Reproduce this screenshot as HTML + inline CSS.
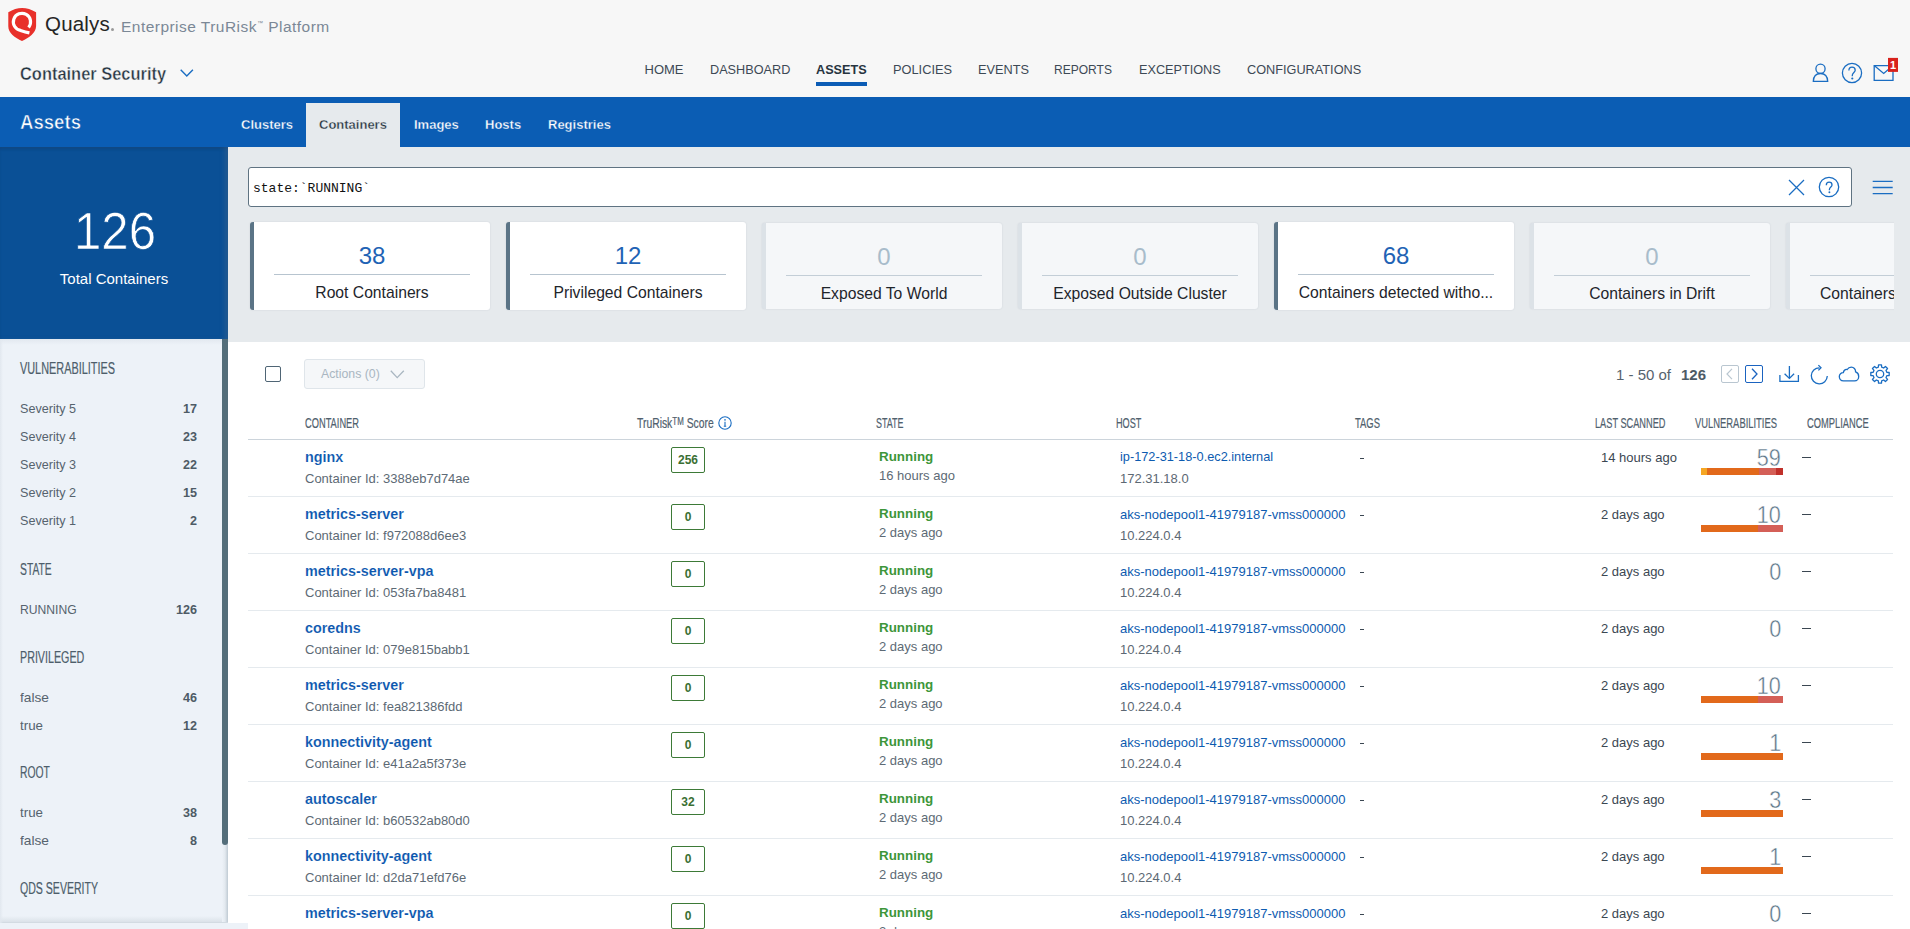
<!DOCTYPE html>
<html><head><meta charset="utf-8">
<style>
*{box-sizing:border-box;margin:0;padding:0}
html,body{width:1910px;height:929px;overflow:hidden;background:#fff;font-family:"Liberation Sans",sans-serif;color:#3b4752}
.t{position:absolute;white-space:nowrap;line-height:1}
.b{position:absolute}
</style></head><body>

<div class="b" style="left:0px;top:0px;width:1910px;height:97px;background:#f7f7f7"></div>
<svg class="b" style="left:0px;top:0px" width="45" height="45" viewBox="0 0 45 45"><path d="M8.3 12.2 Q22 3.6 36.1 12.2 L36.1 26.3 C35.8 33 29 38 22 41 C15 38 8.2 33 8.3 26.3 Z" fill="#e8302a"/>
<path d="M28.6 27.4 A8.6 8.6 0 1 0 20.5 30.4 C23.5 31.4 26.5 32.3 29.4 32.9" fill="none" stroke="#fff" stroke-width="3.2"/></svg>
<div class="t" style="left:45px;transform-origin:left top;top:13.95px;font-size:20.5px;color:#252525;letter-spacing:0.2px">Qualys</div>
<div class="b" style="left:111px;top:28px;width:3px;height:3px;background:#999;border-radius:50%"></div>
<div class="t" style="left:121px;transform-origin:left top;top:18.68px;font-size:15.5px;color:#7b8896;letter-spacing:0.47px">Enterprise TruRisk<span style="font-size:6px;position:relative;top:-7px">™</span> Platform</div>
<div class="t" style="left:20px;transform-origin:left top;top:64.86px;font-size:18px;transform:scaleX(0.913);font-weight:bold;color:#263441;-webkit-text-stroke:0.4px #f7f7f7">Container Security</div>
<svg class="b" style="left:180px;top:69px" width="14" height="9" viewBox="0 0 14 9"><path d="M0.7 0.7 L6.8 7 L12.9 0.7" fill="none" stroke="#1a6dc2" stroke-width="1.4"/></svg>
<div class="t" style="left:644.5px;transform-origin:left top;top:63.20px;font-size:13px;color:#3d4955">HOME</div>
<div class="t" style="left:709.5px;transform-origin:left top;top:63.20px;font-size:13px;transform:scaleX(0.975);color:#3d4955">DASHBOARD</div>
<div class="t" style="left:816px;transform-origin:left top;top:63.20px;font-size:13px;transform:scaleX(0.975);font-weight:bold;color:#27343f">ASSETS</div>
<div class="t" style="left:893px;transform-origin:left top;top:63.20px;font-size:13px;transform:scaleX(0.985);color:#3d4955">POLICIES</div>
<div class="t" style="left:977.5px;transform-origin:left top;top:63.20px;font-size:13px;transform:scaleX(0.98);color:#3d4955">EVENTS</div>
<div class="t" style="left:1054.3px;transform-origin:left top;top:63.20px;font-size:13px;transform:scaleX(0.925);color:#3d4955">REPORTS</div>
<div class="t" style="left:1139px;transform-origin:left top;top:63.20px;font-size:13px;transform:scaleX(0.975);color:#3d4955">EXCEPTIONS</div>
<div class="t" style="left:1246.5px;transform-origin:left top;top:63.20px;font-size:13px;transform:scaleX(0.978);color:#3d4955">CONFIGURATIONS</div>
<div class="b" style="left:816px;top:82px;width:51px;height:4px;background:#0b5cb5"></div>
<svg class="b" style="left:1808px;top:55px" width="95" height="32" viewBox="0 0 95 32"><g fill="none" stroke="#1a6dc2" stroke-width="1.3">
<circle cx="12.5" cy="13.7" r="4.6"/>
<path d="M5.3 26.4 C5.5 21.2 8.4 18.5 12.5 18.5 C16.6 18.5 19.5 21.2 19.7 26.4 Z"/>
<circle cx="44" cy="18" r="9.6"/>
<path d="M40.9 15.4 C40.9 13 42.4 12.2 44 12.2 C45.8 12.2 47.2 13.3 47.2 15.2 C47.2 17.4 44.3 17.6 44.3 20.3 L44.3 21.2"/>
<path d="M66.2 10.6 L85 10.6 L85 25.3 L66.2 25.3 Z"/>
<path d="M66.2 10.6 L75.7 18.4 L85 10.6"/>
</g>
<circle cx="44.3" cy="23.5" r="1.1" fill="#1a6dc2"/>
<rect x="80" y="2.9" width="10" height="14" fill="#d8221c"/>
<text x="85" y="13.5" font-size="11" font-weight="bold" fill="#fff" text-anchor="middle" font-family="Liberation Sans">1</text></svg>
<div class="b" style="left:0px;top:97px;width:1910px;height:50px;background:#0b5db4"></div>
<div class="t" style="left:20px;transform-origin:left top;top:112.27px;font-size:20px;transform:scaleX(0.93);color:#fff;font-weight:bold;-webkit-text-stroke:0.6px #0b5db4">Assets</div>
<div class="b" style="left:306px;top:103px;width:94px;height:44px;background:#e6eaed"></div>
<div class="t" style="left:241px;transform-origin:left top;top:118.00px;font-size:13px;font-weight:bold;color:#fff;-webkit-text-stroke:0.3px #0b5db4">Clusters</div>
<div class="t" style="left:319px;transform-origin:left top;top:118.00px;font-size:13px;font-weight:bold;color:#27343f;-webkit-text-stroke:0.3px #e6eaed">Containers</div>
<div class="t" style="left:414px;transform-origin:left top;top:118.00px;font-size:13px;font-weight:bold;color:#fff;-webkit-text-stroke:0.3px #0b5db4">Images</div>
<div class="t" style="left:485px;transform-origin:left top;top:118.00px;font-size:13px;font-weight:bold;color:#fff;-webkit-text-stroke:0.3px #0b5db4">Hosts</div>
<div class="t" style="left:548px;transform-origin:left top;top:118.00px;font-size:13px;font-weight:bold;color:#fff;-webkit-text-stroke:0.3px #0b5db4">Registries</div>
<div class="b" style="left:0px;top:147px;width:228px;height:192px;background:#0a5096;box-shadow:inset -5px 0 5px -2px rgba(60,100,140,0.55), inset 0 3px 3px -1px rgba(20,50,90,0.35)"></div>
<div class="t" style="left:-285.5px;width:800px;text-align:center;transform-origin:center top;top:205.83px;font-size:51px;transform:scaleX(0.965);color:#fff;-webkit-text-stroke:0.7px #0a5096">126</div>
<div class="t" style="left:-286px;width:800px;text-align:center;transform-origin:center top;top:270.90px;font-size:15px;color:#fff">Total Containers</div>
<div class="b" style="left:228px;top:147px;width:1682px;height:195px;background:#e6eaed"></div>
<div class="b" style="left:248px;top:167px;width:1604px;height:40px;background:#fff;border:1px solid #5f7382;border-radius:3px"></div>
<div class="t" style="left:253px;transform-origin:left top;top:181.64px;font-size:13px;font-family:'Liberation Mono',monospace;color:#111">state:`RUNNING`</div>
<svg class="b" style="left:1788px;top:179px" width="17" height="17" viewBox="0 0 17 17"><path d="M1 1 L16 16 M16 1 L1 16" stroke="#1a6dc2" stroke-width="1.25" fill="none"/></svg>
<svg class="b" style="left:1818px;top:176px" width="22" height="22" viewBox="0 0 22 22"><circle cx="11" cy="11" r="9.7" fill="none" stroke="#1a6dc2" stroke-width="1.3"/>
<path d="M8.3 9.3 C8.3 7.2 9.6 6.2 11.1 6.2 C12.8 6.2 14 7.3 14 8.9 C14 10.9 11.4 11 11.4 13.6 L11.4 14.2" fill="none" stroke="#1a6dc2" stroke-width="1.3"/>
<circle cx="11.4" cy="16.3" r="0.95" fill="#1a6dc2"/></svg>
<svg class="b" style="left:1872px;top:179px" width="22" height="16" viewBox="0 0 22 16"><path d="M0.7 2.4 H20.7 M0.7 8.5 H20.7 M0.7 14.6 H20.7" stroke="#1a6dc2" stroke-width="1.3" fill="none"/></svg>
<div class="b" style="left:248px;top:218px;width:1646px;height:96px;overflow:hidden">
<div class="b" style="left:2px;top:4px;width:240px;height:88px;background:#fff;border-radius:3px;border-left:4px solid #5b7486;box-shadow:0 0 2px rgba(40,60,80,0.12)"></div>
<div class="b" style="left:26px;top:56px;width:196px;height:1px;background:#b7c4cf"></div>
<div class="t" style="left:-276px;width:800px;text-align:center;top:25.68px;font-size:24px;color:#1f63b5">38</div>
<div class="t" style="left:-276px;width:800px;text-align:center;top:66.71px;font-size:15.7px;color:#1e252b">Root Containers</div>
<div class="b" style="left:258px;top:4px;width:240px;height:88px;background:#fff;border-radius:3px;border-left:4px solid #5b7486;box-shadow:0 0 2px rgba(40,60,80,0.12)"></div>
<div class="b" style="left:282px;top:56px;width:196px;height:1px;background:#b7c4cf"></div>
<div class="t" style="left:-20px;width:800px;text-align:center;top:25.68px;font-size:24px;color:#1f63b5">12</div>
<div class="t" style="left:-20px;width:800px;text-align:center;top:66.71px;font-size:15.7px;color:#1e252b">Privileged Containers</div>
<div class="b" style="left:514px;top:5px;width:240px;height:86px;background:#f5f7f9;border-radius:3px;border-left:4px solid #dce2e7;box-shadow:0 0 2px rgba(40,60,80,0.12)"></div>
<div class="b" style="left:538px;top:57px;width:196px;height:1px;background:#c3ced7"></div>
<div class="t" style="left:236px;width:800px;text-align:center;top:26.68px;font-size:24px;color:#a8bccb">0</div>
<div class="t" style="left:236px;width:800px;text-align:center;top:67.71px;font-size:15.7px;color:#1e252b">Exposed To World</div>
<div class="b" style="left:770px;top:5px;width:240px;height:86px;background:#f5f7f9;border-radius:3px;border-left:4px solid #dce2e7;box-shadow:0 0 2px rgba(40,60,80,0.12)"></div>
<div class="b" style="left:794px;top:57px;width:196px;height:1px;background:#c3ced7"></div>
<div class="t" style="left:492px;width:800px;text-align:center;top:26.68px;font-size:24px;color:#a8bccb">0</div>
<div class="t" style="left:492px;width:800px;text-align:center;top:67.71px;font-size:15.7px;color:#1e252b">Exposed Outside Cluster</div>
<div class="b" style="left:1026px;top:4px;width:240px;height:88px;background:#fff;border-radius:3px;border-left:4px solid #5b7486;box-shadow:0 0 2px rgba(40,60,80,0.12)"></div>
<div class="b" style="left:1050px;top:56px;width:196px;height:1px;background:#b7c4cf"></div>
<div class="t" style="left:748px;width:800px;text-align:center;top:25.68px;font-size:24px;color:#1f63b5">68</div>
<div class="t" style="left:748px;width:800px;text-align:center;top:66.71px;font-size:15.7px;color:#1e252b">Containers detected witho...</div>
<div class="b" style="left:1282px;top:5px;width:240px;height:86px;background:#f5f7f9;border-radius:3px;border-left:4px solid #dce2e7;box-shadow:0 0 2px rgba(40,60,80,0.12)"></div>
<div class="b" style="left:1306px;top:57px;width:196px;height:1px;background:#c3ced7"></div>
<div class="t" style="left:1004px;width:800px;text-align:center;top:26.68px;font-size:24px;color:#a8bccb">0</div>
<div class="t" style="left:1004px;width:800px;text-align:center;top:67.71px;font-size:15.7px;color:#1e252b">Containers in Drift</div>
<div class="b" style="left:1538px;top:5px;width:240px;height:86px;background:#f5f7f9;border-radius:3px;border-left:4px solid #dce2e7;box-shadow:0 0 2px rgba(40,60,80,0.12)"></div>
<div class="b" style="left:1562px;top:57px;width:196px;height:1px;background:#c3ced7"></div>
<div class="t" style="left:1260px;width:800px;text-align:center;top:26.68px;font-size:24px;color:#a8bccb">0</div>
<div class="t" style="left:1572px;top:67.71px;font-size:15.7px;color:#1e252b">Containers with Secrets</div>
</div>
<div class="b" style="left:0px;top:339px;width:228px;height:590px;background:#edf2f8"></div>
<div class="b" style="left:0px;top:339px;width:222px;height:6px;background:linear-gradient(#e2e8ef,#edf2f8)"></div>
<div class="b" style="left:222px;top:339px;width:6px;height:584px;background:linear-gradient(90deg,#edf2f8,#e3e9ef 50%,#bfcad3)"></div>
<div class="b" style="left:222px;top:339px;width:6px;height:506px;background:#546e7a;border-radius:0 0 3px 3px"></div>
<div class="b" style="left:0px;top:916px;width:222px;height:6px;background:linear-gradient(rgba(213,221,228,0),#dbe2e9)"></div>
<div class="b" style="left:0px;top:922px;width:228px;height:1px;background:#d3dbe2"></div>
<div class="b" style="left:0px;top:339px;width:3px;height:584px;background:linear-gradient(90deg,#e2e8ef,rgba(237,242,248,0))"></div>
<div class="b" style="left:0px;top:923px;width:248px;height:6px;background:#edf2f8"></div>
<div class="t" style="left:20px;transform-origin:left top;top:360.96px;font-size:16px;transform:scaleX(0.68);color:#4d5e6b;-webkit-text-stroke:0.2px #4d5e6b">VULNERABILITIES</div>
<div class="t" style="left:20px;transform-origin:left top;top:402.93px;font-size:12.6px;color:#56636e">Severity 5</div>
<div class="t" style="right:1713px;transform-origin:right top;text-align:right;top:402.93px;font-size:12.6px;font-weight:bold;color:#4e5b66">17</div>
<div class="t" style="left:20px;transform-origin:left top;top:430.93px;font-size:12.6px;color:#56636e">Severity 4</div>
<div class="t" style="right:1713px;transform-origin:right top;text-align:right;top:430.93px;font-size:12.6px;font-weight:bold;color:#4e5b66">23</div>
<div class="t" style="left:20px;transform-origin:left top;top:458.93px;font-size:12.6px;color:#56636e">Severity 3</div>
<div class="t" style="right:1713px;transform-origin:right top;text-align:right;top:458.93px;font-size:12.6px;font-weight:bold;color:#4e5b66">22</div>
<div class="t" style="left:20px;transform-origin:left top;top:486.93px;font-size:12.6px;color:#56636e">Severity 2</div>
<div class="t" style="right:1713px;transform-origin:right top;text-align:right;top:486.93px;font-size:12.6px;font-weight:bold;color:#4e5b66">15</div>
<div class="t" style="left:20px;transform-origin:left top;top:514.93px;font-size:12.6px;color:#56636e">Severity 1</div>
<div class="t" style="right:1713px;transform-origin:right top;text-align:right;top:514.93px;font-size:12.6px;font-weight:bold;color:#4e5b66">2</div>
<div class="t" style="left:20px;transform-origin:left top;top:561.56px;font-size:16px;transform:scaleX(0.645);color:#4d5e6b;-webkit-text-stroke:0.2px #4d5e6b">STATE</div>
<div class="t" style="left:20px;transform-origin:left top;top:604.13px;font-size:12.6px;transform:scaleX(0.965);color:#56636e">RUNNING</div>
<div class="t" style="right:1713px;transform-origin:right top;text-align:right;top:604.13px;font-size:12.6px;font-weight:bold;color:#4e5b66">126</div>
<div class="t" style="left:20px;transform-origin:left top;top:649.56px;font-size:16px;transform:scaleX(0.67);color:#4d5e6b;-webkit-text-stroke:0.2px #4d5e6b">PRIVILEGED</div>
<div class="t" style="left:20px;transform-origin:left top;top:691.53px;font-size:12.6px;transform:scaleX(1.09);color:#56636e">false</div>
<div class="t" style="right:1713px;transform-origin:right top;text-align:right;top:691.53px;font-size:12.6px;font-weight:bold;color:#4e5b66">46</div>
<div class="t" style="left:20px;transform-origin:left top;top:719.53px;font-size:12.6px;transform:scaleX(1.06);color:#56636e">true</div>
<div class="t" style="right:1713px;transform-origin:right top;text-align:right;top:719.53px;font-size:12.6px;font-weight:bold;color:#4e5b66">12</div>
<div class="t" style="left:20px;transform-origin:left top;top:765.36px;font-size:16px;transform:scaleX(0.647);color:#4d5e6b;-webkit-text-stroke:0.2px #4d5e6b">ROOT</div>
<div class="t" style="left:20px;transform-origin:left top;top:807.43px;font-size:12.6px;transform:scaleX(1.06);color:#56636e">true</div>
<div class="t" style="right:1713px;transform-origin:right top;text-align:right;top:807.43px;font-size:12.6px;font-weight:bold;color:#4e5b66">38</div>
<div class="t" style="left:20px;transform-origin:left top;top:835.43px;font-size:12.6px;transform:scaleX(1.09);color:#56636e">false</div>
<div class="t" style="right:1713px;transform-origin:right top;text-align:right;top:835.43px;font-size:12.6px;font-weight:bold;color:#4e5b66">8</div>
<div class="t" style="left:20px;transform-origin:left top;top:881.16px;font-size:16px;transform:scaleX(0.66);color:#4d5e6b;-webkit-text-stroke:0.2px #4d5e6b">QDS SEVERITY</div>
<div class="b" style="left:265px;top:366px;width:16px;height:16px;border:1.5px solid #4f6575;border-radius:2px;background:#fff"></div>
<div class="b" style="left:304px;top:359px;width:121px;height:30px;background:#f5f7f9;border:1px solid #dfe5ea;border-radius:3px"></div>
<div class="t" style="left:321px;transform-origin:left top;top:367.59px;font-size:12.3px;color:#a9b6c1">Actions (0)</div>
<svg class="b" style="left:390px;top:370px" width="15" height="9" viewBox="0 0 15 9"><path d="M0.8 0.8 L7.2 7.6 L13.8 0.8" fill="none" stroke="#a9b6c1" stroke-width="1.3"/></svg>
<div class="t" style="left:1616px;transform-origin:left top;top:367.00px;font-size:15px;color:#56636e">1 - 50 of</div>
<div class="t" style="left:1681px;transform-origin:left top;top:367.00px;font-size:15px;font-weight:bold;color:#4e5b66">126</div>
<div class="b" style="left:1721px;top:365px;width:18px;height:18px;border:1px solid #b9c6d0;border-radius:2px"></div>
<svg class="b" style="left:1726px;top:368px" width="7" height="12" viewBox="0 0 7 12"><path d="M6 0.8 L1 6 L6 11.2" fill="none" stroke="#b9c6d0" stroke-width="1.2"/></svg>
<div class="b" style="left:1745px;top:365px;width:18px;height:18px;border:1.4px solid #1a63c0;border-radius:2px"></div>
<svg class="b" style="left:1751px;top:368px" width="8" height="12" viewBox="0 0 8 12"><path d="M1 0.8 L6 6 L1 11.2" fill="none" stroke="#1a63c0" stroke-width="1.3"/></svg>
<svg class="b" style="left:1778px;top:364px" width="22" height="20" viewBox="0 0 22 20"><g fill="none" stroke="#1a6dc2" stroke-width="1.3">
<path d="M11.4 2 V14"/><path d="M6.6 9.8 L11.4 14.4 L16.1 9.8"/><path d="M1.9 11 V17.4 H20.4 V11"/></g></svg>
<svg class="b" style="left:1809px;top:363px" width="22" height="22" viewBox="0 0 22 22"><g fill="none" stroke="#1a6dc2" stroke-width="1.3">
<path d="M18.3 13.1 A8 8 0 1 1 10.5 4.8"/><path d="M9.4 2.1 L12 4.8 L9.4 7.4"/></g></svg>
<svg class="b" style="left:1837px;top:365px" width="24" height="19" viewBox="0 0 24 19"><path d="M6.5 15.9 C3.6 15.9 2.3 13.8 2.3 11.6 C2.3 9.2 4.2 7.5 6.3 7.6 C6.8 5.4 8.5 4.2 10.2 4.5 C11.2 2.8 12.7 2.1 14.3 2.1 C16.8 2.1 18.7 4.1 18.6 6.9 C20.8 7.6 21.7 9.5 21.7 11.4 C21.7 13.8 20 15.9 17.6 15.9 Z" fill="none" stroke="#1a6dc2" stroke-width="1.3"/></svg>
<svg class="b" style="left:1869px;top:363px" width="22" height="22" viewBox="0 0 22 22"><path d="M17.80 9.34 L20.18 9.52 L20.18 12.48 L17.80 12.66 L16.98 14.63 L18.54 16.44 L16.44 18.54 L14.63 16.98 L12.66 17.80 L12.48 20.18 L9.52 20.18 L9.34 17.80 L7.37 16.98 L5.56 18.54 L3.46 16.44 L5.02 14.63 L4.20 12.66 L1.82 12.48 L1.82 9.52 L4.20 9.34 L5.02 7.37 L3.46 5.56 L5.56 3.46 L7.37 5.02 L9.34 4.20 L9.52 1.82 L12.48 1.82 L12.66 4.20 L14.63 5.02 L16.44 3.46 L18.54 5.56 L16.98 7.37 Z" fill="none" stroke="#1a6dc2" stroke-width="1.3" stroke-linejoin="round"/><circle cx="11" cy="11" r="3.7" fill="none" stroke="#1a6dc2" stroke-width="1.3"/></svg>
<div class="t" style="left:305px;transform-origin:left top;top:416.11px;font-size:14.4px;transform:scaleX(0.645);color:#4f606d;-webkit-text-stroke:0.2px #4f606d">CONTAINER</div>
<div class="t" style="left:637px;transform-origin:left top;top:416.11px;font-size:14.4px;transform:scaleX(0.72);color:#4f606d;-webkit-text-stroke:0.2px #4f606d">TruRisk<span style="font-size:11px;position:relative;top:-3px">TM</span> Score</div>
<svg class="b" style="left:718px;top:416px" width="14" height="14" viewBox="0 0 14 14"><circle cx="7" cy="7" r="6.2" fill="none" stroke="#1a6dc2" stroke-width="1.1"/><path d="M7 5.8 V10.2 M5.8 10.3 H8.2" stroke="#1a6dc2" stroke-width="1.1"/><circle cx="7" cy="3.9" r="0.8" fill="#1a6dc2"/></svg>
<div class="t" style="left:876px;transform-origin:left top;top:416.11px;font-size:14.4px;transform:scaleX(0.62);color:#4f606d;-webkit-text-stroke:0.2px #4f606d">STATE</div>
<div class="t" style="left:1116px;transform-origin:left top;top:416.11px;font-size:14.4px;transform:scaleX(0.635);color:#4f606d;-webkit-text-stroke:0.2px #4f606d">HOST</div>
<div class="t" style="left:1355px;transform-origin:left top;top:416.11px;font-size:14.4px;transform:scaleX(0.656);color:#4f606d;-webkit-text-stroke:0.2px #4f606d">TAGS</div>
<div class="t" style="left:1595px;transform-origin:left top;top:416.11px;font-size:14.4px;transform:scaleX(0.64);color:#4f606d;-webkit-text-stroke:0.2px #4f606d">LAST SCANNED</div>
<div class="t" style="left:1695px;transform-origin:left top;top:416.11px;font-size:14.4px;transform:scaleX(0.653);color:#4f606d;-webkit-text-stroke:0.2px #4f606d">VULNERABILITIES</div>
<div class="t" style="left:1807px;transform-origin:left top;top:416.11px;font-size:14.4px;transform:scaleX(0.648);color:#4f606d;-webkit-text-stroke:0.2px #4f606d">COMPLIANCE</div>
<div class="b" style="left:248px;top:439px;width:1645px;height:1px;background:#ccd4db"></div>
<div class="t" style="left:305px;transform-origin:left top;top:449.65px;font-size:14.35px;font-weight:bold;color:#0a56ae;-webkit-text-stroke:0.12px #fff">nginx</div>
<div class="t" style="left:305px;transform-origin:left top;top:472.00px;font-size:13px;color:#5d6a75">Container Id: 3388eb7d74ae</div>
<div class="b" style="left:671px;top:447px;width:34px;height:26px;border:1.5px solid #3d7a37;border-radius:2px"></div>
<div class="t" style="left:288px;width:800px;text-align:center;transform-origin:center top;top:453.84px;font-size:12px;font-weight:bold;color:#3a6f33">256</div>
<div class="t" style="left:879px;transform-origin:left top;top:450.26px;font-size:13.4px;font-weight:bold;color:#3d963a">Running</div>
<div class="t" style="left:879px;transform-origin:left top;top:468.80px;font-size:13px;color:#5d6a75">16 hours ago</div>
<div class="t" style="left:1120px;transform-origin:left top;top:451.41px;font-size:12.75px;color:#0d5bb0">ip-172-31-18-0.ec2.internal</div>
<div class="t" style="left:1120px;transform-origin:left top;top:472.40px;font-size:13px;color:#5c6873">172.31.18.0</div>
<div class="b" style="left:1360px;top:458px;width:4px;height:1.3px;background:#3b4752"></div>
<div class="t" style="left:1601px;transform-origin:left top;top:450.90px;font-size:13px;color:#3b4752">14 hours ago</div>
<div class="t" style="right:129px;transform-origin:right top;text-align:right;top:446.18px;font-size:24px;transform:scaleX(0.9);color:#5a7487;-webkit-text-stroke:0.45px #fff">59</div>
<div class="b" style="left:1701px;top:468px;width:6px;height:7px;background:#f5a623"></div>
<div class="b" style="left:1707px;top:468px;width:52px;height:7px;background:#e2691b"></div>
<div class="b" style="left:1759px;top:468px;width:17px;height:7px;background:#d45f57"></div>
<div class="b" style="left:1776px;top:468px;width:7px;height:7px;background:#c0302a"></div>
<div class="b" style="left:1802px;top:457px;width:9px;height:1.4px;background:#3b4752"></div>
<div class="b" style="left:248px;top:496px;width:1645px;height:1px;background:#e5eaee"></div>
<div class="t" style="left:305px;transform-origin:left top;top:506.65px;font-size:14.35px;font-weight:bold;color:#0a56ae;-webkit-text-stroke:0.12px #fff">metrics-server</div>
<div class="t" style="left:305px;transform-origin:left top;top:529.00px;font-size:13px;color:#5d6a75">Container Id: f972088d6ee3</div>
<div class="b" style="left:671px;top:504px;width:34px;height:26px;border:1.5px solid #3d7a37;border-radius:2px"></div>
<div class="t" style="left:288px;width:800px;text-align:center;transform-origin:center top;top:510.84px;font-size:12px;font-weight:bold;color:#3a6f33">0</div>
<div class="t" style="left:879px;transform-origin:left top;top:507.26px;font-size:13.4px;font-weight:bold;color:#3d963a">Running</div>
<div class="t" style="left:879px;transform-origin:left top;top:525.80px;font-size:13px;color:#5d6a75">2 days ago</div>
<div class="t" style="left:1120px;transform-origin:left top;top:508.20px;font-size:13px;color:#0d5bb0">aks-nodepool1-41979187-vmss000000</div>
<div class="t" style="left:1120px;transform-origin:left top;top:529.40px;font-size:13px;color:#5c6873">10.224.0.4</div>
<div class="b" style="left:1360px;top:515px;width:4px;height:1.3px;background:#3b4752"></div>
<div class="t" style="left:1601px;transform-origin:left top;top:507.90px;font-size:13px;color:#3b4752">2 days ago</div>
<div class="t" style="right:129px;transform-origin:right top;text-align:right;top:503.18px;font-size:24px;transform:scaleX(0.9);color:#5a7487;-webkit-text-stroke:0.45px #fff">10</div>
<div class="b" style="left:1701px;top:525px;width:57px;height:7px;background:#e2691b"></div>
<div class="b" style="left:1758px;top:525px;width:25px;height:7px;background:#d45f57"></div>
<div class="b" style="left:1802px;top:514px;width:9px;height:1.4px;background:#3b4752"></div>
<div class="b" style="left:248px;top:553px;width:1645px;height:1px;background:#e5eaee"></div>
<div class="t" style="left:305px;transform-origin:left top;top:563.65px;font-size:14.35px;font-weight:bold;color:#0a56ae;-webkit-text-stroke:0.12px #fff">metrics-server-vpa</div>
<div class="t" style="left:305px;transform-origin:left top;top:586.00px;font-size:13px;color:#5d6a75">Container Id: 053fa7ba8481</div>
<div class="b" style="left:671px;top:561px;width:34px;height:26px;border:1.5px solid #3d7a37;border-radius:2px"></div>
<div class="t" style="left:288px;width:800px;text-align:center;transform-origin:center top;top:567.84px;font-size:12px;font-weight:bold;color:#3a6f33">0</div>
<div class="t" style="left:879px;transform-origin:left top;top:564.26px;font-size:13.4px;font-weight:bold;color:#3d963a">Running</div>
<div class="t" style="left:879px;transform-origin:left top;top:582.80px;font-size:13px;color:#5d6a75">2 days ago</div>
<div class="t" style="left:1120px;transform-origin:left top;top:565.20px;font-size:13px;color:#0d5bb0">aks-nodepool1-41979187-vmss000000</div>
<div class="t" style="left:1120px;transform-origin:left top;top:586.40px;font-size:13px;color:#5c6873">10.224.0.4</div>
<div class="b" style="left:1360px;top:572px;width:4px;height:1.3px;background:#3b4752"></div>
<div class="t" style="left:1601px;transform-origin:left top;top:564.90px;font-size:13px;color:#3b4752">2 days ago</div>
<div class="t" style="right:129px;transform-origin:right top;text-align:right;top:560.18px;font-size:24px;transform:scaleX(0.9);color:#5a7487;-webkit-text-stroke:0.45px #fff">0</div>
<div class="b" style="left:1802px;top:571px;width:9px;height:1.4px;background:#3b4752"></div>
<div class="b" style="left:248px;top:610px;width:1645px;height:1px;background:#e5eaee"></div>
<div class="t" style="left:305px;transform-origin:left top;top:620.65px;font-size:14.35px;font-weight:bold;color:#0a56ae;-webkit-text-stroke:0.12px #fff">coredns</div>
<div class="t" style="left:305px;transform-origin:left top;top:643.00px;font-size:13px;color:#5d6a75">Container Id: 079e815babb1</div>
<div class="b" style="left:671px;top:618px;width:34px;height:26px;border:1.5px solid #3d7a37;border-radius:2px"></div>
<div class="t" style="left:288px;width:800px;text-align:center;transform-origin:center top;top:624.84px;font-size:12px;font-weight:bold;color:#3a6f33">0</div>
<div class="t" style="left:879px;transform-origin:left top;top:621.26px;font-size:13.4px;font-weight:bold;color:#3d963a">Running</div>
<div class="t" style="left:879px;transform-origin:left top;top:639.80px;font-size:13px;color:#5d6a75">2 days ago</div>
<div class="t" style="left:1120px;transform-origin:left top;top:622.20px;font-size:13px;color:#0d5bb0">aks-nodepool1-41979187-vmss000000</div>
<div class="t" style="left:1120px;transform-origin:left top;top:643.40px;font-size:13px;color:#5c6873">10.224.0.4</div>
<div class="b" style="left:1360px;top:629px;width:4px;height:1.3px;background:#3b4752"></div>
<div class="t" style="left:1601px;transform-origin:left top;top:621.90px;font-size:13px;color:#3b4752">2 days ago</div>
<div class="t" style="right:129px;transform-origin:right top;text-align:right;top:617.18px;font-size:24px;transform:scaleX(0.9);color:#5a7487;-webkit-text-stroke:0.45px #fff">0</div>
<div class="b" style="left:1802px;top:628px;width:9px;height:1.4px;background:#3b4752"></div>
<div class="b" style="left:248px;top:667px;width:1645px;height:1px;background:#e5eaee"></div>
<div class="t" style="left:305px;transform-origin:left top;top:677.65px;font-size:14.35px;font-weight:bold;color:#0a56ae;-webkit-text-stroke:0.12px #fff">metrics-server</div>
<div class="t" style="left:305px;transform-origin:left top;top:700.00px;font-size:13px;color:#5d6a75">Container Id: fea821386fdd</div>
<div class="b" style="left:671px;top:675px;width:34px;height:26px;border:1.5px solid #3d7a37;border-radius:2px"></div>
<div class="t" style="left:288px;width:800px;text-align:center;transform-origin:center top;top:681.84px;font-size:12px;font-weight:bold;color:#3a6f33">0</div>
<div class="t" style="left:879px;transform-origin:left top;top:678.26px;font-size:13.4px;font-weight:bold;color:#3d963a">Running</div>
<div class="t" style="left:879px;transform-origin:left top;top:696.80px;font-size:13px;color:#5d6a75">2 days ago</div>
<div class="t" style="left:1120px;transform-origin:left top;top:679.20px;font-size:13px;color:#0d5bb0">aks-nodepool1-41979187-vmss000000</div>
<div class="t" style="left:1120px;transform-origin:left top;top:700.40px;font-size:13px;color:#5c6873">10.224.0.4</div>
<div class="b" style="left:1360px;top:686px;width:4px;height:1.3px;background:#3b4752"></div>
<div class="t" style="left:1601px;transform-origin:left top;top:678.90px;font-size:13px;color:#3b4752">2 days ago</div>
<div class="t" style="right:129px;transform-origin:right top;text-align:right;top:674.18px;font-size:24px;transform:scaleX(0.9);color:#5a7487;-webkit-text-stroke:0.45px #fff">10</div>
<div class="b" style="left:1701px;top:696px;width:57px;height:7px;background:#e2691b"></div>
<div class="b" style="left:1758px;top:696px;width:25px;height:7px;background:#d45f57"></div>
<div class="b" style="left:1802px;top:685px;width:9px;height:1.4px;background:#3b4752"></div>
<div class="b" style="left:248px;top:724px;width:1645px;height:1px;background:#e5eaee"></div>
<div class="t" style="left:305px;transform-origin:left top;top:734.65px;font-size:14.35px;font-weight:bold;color:#0a56ae;-webkit-text-stroke:0.12px #fff">konnectivity-agent</div>
<div class="t" style="left:305px;transform-origin:left top;top:757.00px;font-size:13px;color:#5d6a75">Container Id: e41a2a5f373e</div>
<div class="b" style="left:671px;top:732px;width:34px;height:26px;border:1.5px solid #3d7a37;border-radius:2px"></div>
<div class="t" style="left:288px;width:800px;text-align:center;transform-origin:center top;top:738.84px;font-size:12px;font-weight:bold;color:#3a6f33">0</div>
<div class="t" style="left:879px;transform-origin:left top;top:735.26px;font-size:13.4px;font-weight:bold;color:#3d963a">Running</div>
<div class="t" style="left:879px;transform-origin:left top;top:753.80px;font-size:13px;color:#5d6a75">2 days ago</div>
<div class="t" style="left:1120px;transform-origin:left top;top:736.20px;font-size:13px;color:#0d5bb0">aks-nodepool1-41979187-vmss000000</div>
<div class="t" style="left:1120px;transform-origin:left top;top:757.40px;font-size:13px;color:#5c6873">10.224.0.4</div>
<div class="b" style="left:1360px;top:743px;width:4px;height:1.3px;background:#3b4752"></div>
<div class="t" style="left:1601px;transform-origin:left top;top:735.90px;font-size:13px;color:#3b4752">2 days ago</div>
<div class="t" style="right:129px;transform-origin:right top;text-align:right;top:731.18px;font-size:24px;transform:scaleX(0.9);color:#5a7487;-webkit-text-stroke:0.45px #fff">1</div>
<div class="b" style="left:1701px;top:753px;width:82px;height:7px;background:#e2691b"></div>
<div class="b" style="left:1802px;top:742px;width:9px;height:1.4px;background:#3b4752"></div>
<div class="b" style="left:248px;top:781px;width:1645px;height:1px;background:#e5eaee"></div>
<div class="t" style="left:305px;transform-origin:left top;top:791.65px;font-size:14.35px;font-weight:bold;color:#0a56ae;-webkit-text-stroke:0.12px #fff">autoscaler</div>
<div class="t" style="left:305px;transform-origin:left top;top:814.00px;font-size:13px;color:#5d6a75">Container Id: b60532ab80d0</div>
<div class="b" style="left:671px;top:789px;width:34px;height:26px;border:1.5px solid #3d7a37;border-radius:2px"></div>
<div class="t" style="left:288px;width:800px;text-align:center;transform-origin:center top;top:795.84px;font-size:12px;font-weight:bold;color:#3a6f33">32</div>
<div class="t" style="left:879px;transform-origin:left top;top:792.26px;font-size:13.4px;font-weight:bold;color:#3d963a">Running</div>
<div class="t" style="left:879px;transform-origin:left top;top:810.80px;font-size:13px;color:#5d6a75">2 days ago</div>
<div class="t" style="left:1120px;transform-origin:left top;top:793.20px;font-size:13px;color:#0d5bb0">aks-nodepool1-41979187-vmss000000</div>
<div class="t" style="left:1120px;transform-origin:left top;top:814.40px;font-size:13px;color:#5c6873">10.224.0.4</div>
<div class="b" style="left:1360px;top:800px;width:4px;height:1.3px;background:#3b4752"></div>
<div class="t" style="left:1601px;transform-origin:left top;top:792.90px;font-size:13px;color:#3b4752">2 days ago</div>
<div class="t" style="right:129px;transform-origin:right top;text-align:right;top:788.18px;font-size:24px;transform:scaleX(0.9);color:#5a7487;-webkit-text-stroke:0.45px #fff">3</div>
<div class="b" style="left:1701px;top:810px;width:82px;height:7px;background:#e2691b"></div>
<div class="b" style="left:1802px;top:799px;width:9px;height:1.4px;background:#3b4752"></div>
<div class="b" style="left:248px;top:838px;width:1645px;height:1px;background:#e5eaee"></div>
<div class="t" style="left:305px;transform-origin:left top;top:848.65px;font-size:14.35px;font-weight:bold;color:#0a56ae;-webkit-text-stroke:0.12px #fff">konnectivity-agent</div>
<div class="t" style="left:305px;transform-origin:left top;top:871.00px;font-size:13px;color:#5d6a75">Container Id: d2da71efd76e</div>
<div class="b" style="left:671px;top:846px;width:34px;height:26px;border:1.5px solid #3d7a37;border-radius:2px"></div>
<div class="t" style="left:288px;width:800px;text-align:center;transform-origin:center top;top:852.84px;font-size:12px;font-weight:bold;color:#3a6f33">0</div>
<div class="t" style="left:879px;transform-origin:left top;top:849.26px;font-size:13.4px;font-weight:bold;color:#3d963a">Running</div>
<div class="t" style="left:879px;transform-origin:left top;top:867.80px;font-size:13px;color:#5d6a75">2 days ago</div>
<div class="t" style="left:1120px;transform-origin:left top;top:850.20px;font-size:13px;color:#0d5bb0">aks-nodepool1-41979187-vmss000000</div>
<div class="t" style="left:1120px;transform-origin:left top;top:871.40px;font-size:13px;color:#5c6873">10.224.0.4</div>
<div class="b" style="left:1360px;top:857px;width:4px;height:1.3px;background:#3b4752"></div>
<div class="t" style="left:1601px;transform-origin:left top;top:849.90px;font-size:13px;color:#3b4752">2 days ago</div>
<div class="t" style="right:129px;transform-origin:right top;text-align:right;top:845.18px;font-size:24px;transform:scaleX(0.9);color:#5a7487;-webkit-text-stroke:0.45px #fff">1</div>
<div class="b" style="left:1701px;top:867px;width:82px;height:7px;background:#e2691b"></div>
<div class="b" style="left:1802px;top:856px;width:9px;height:1.4px;background:#3b4752"></div>
<div class="b" style="left:248px;top:895px;width:1645px;height:1px;background:#e5eaee"></div>
<div class="t" style="left:305px;transform-origin:left top;top:905.65px;font-size:14.35px;font-weight:bold;color:#0a56ae;-webkit-text-stroke:0.12px #fff">metrics-server-vpa</div>
<div class="t" style="left:305px;transform-origin:left top;top:928.00px;font-size:13px;color:#5d6a75">Container Id: 0000</div>
<div class="b" style="left:671px;top:903px;width:34px;height:26px;border:1.5px solid #3d7a37;border-radius:2px"></div>
<div class="t" style="left:288px;width:800px;text-align:center;transform-origin:center top;top:909.84px;font-size:12px;font-weight:bold;color:#3a6f33">0</div>
<div class="t" style="left:879px;transform-origin:left top;top:906.26px;font-size:13.4px;font-weight:bold;color:#3d963a">Running</div>
<div class="t" style="left:879px;transform-origin:left top;top:924.80px;font-size:13px;color:#5d6a75">2 days ago</div>
<div class="t" style="left:1120px;transform-origin:left top;top:907.20px;font-size:13px;color:#0d5bb0">aks-nodepool1-41979187-vmss000000</div>
<div class="t" style="left:1120px;transform-origin:left top;top:928.40px;font-size:13px;color:#5c6873">10.224.0.4</div>
<div class="b" style="left:1360px;top:914px;width:4px;height:1.3px;background:#3b4752"></div>
<div class="t" style="left:1601px;transform-origin:left top;top:906.90px;font-size:13px;color:#3b4752">2 days ago</div>
<div class="t" style="right:129px;transform-origin:right top;text-align:right;top:902.18px;font-size:24px;transform:scaleX(0.9);color:#5a7487;-webkit-text-stroke:0.45px #fff">0</div>
<div class="b" style="left:1802px;top:913px;width:9px;height:1.4px;background:#3b4752"></div>
<div class="b" style="left:248px;top:952px;width:1645px;height:1px;background:#e5eaee"></div>
</body></html>
